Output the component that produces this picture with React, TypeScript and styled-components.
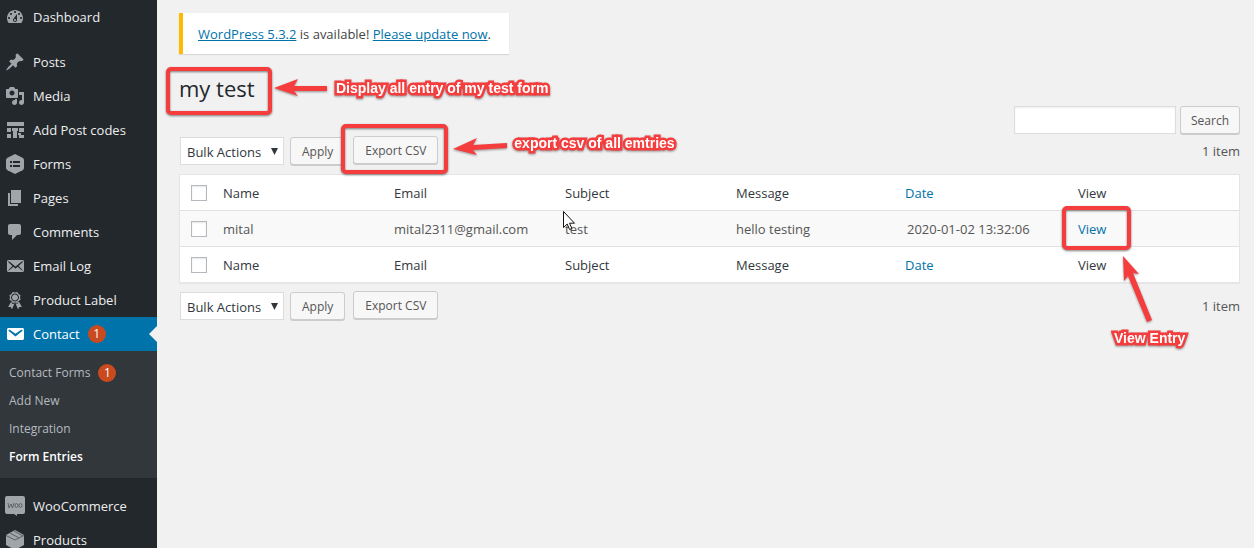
import React from "react";
import styled, { createGlobalStyle } from "styled-components";

const GlobalStyle = createGlobalStyle`
  *, *::before, *::after { box-sizing: border-box; }
  body {
    margin: 0;
    background: #f1f1f1;
    color: #444;
    font-family: "Open Sans", "Noto Sans", sans-serif;
    font-size: 13px;
    line-height: 18px;
  }
  a { color: #0073aa; }
`;

const Shell = styled.div`
  display: flex;
  height: 100vh;
  overflow: hidden;
`;

const Sidebar = styled.nav`
  flex: 0 0 157px;
  background: #23282d;
`;

const MenuList = styled.ul`
  list-style: none;
  margin: 0;
  padding: 0;
`;

const MenuSeparator = styled.li`
  height: 11px;
`;

const MenuLink = styled.a<{ $current?: boolean }>`
  position: relative;
  display: flex;
  align-items: center;
  height: 34px;
  padding-left: 5px;
  gap: 8px;
  font-size: 13px;
  white-space: nowrap;
  text-decoration: none;
  color: ${(p) => (p.$current ? "#fff" : "#eee")};
  background: ${(p) => (p.$current ? "#0073aa" : "transparent")};
  svg {
    flex: none;
    fill: ${(p) => (p.$current ? "#fff" : "#a0a5aa")};
  }
  ${(p) =>
    p.$current &&
    `&::after {
      content: "";
      position: absolute;
      right: 0;
      border: 8px solid transparent;
      border-right-color: #f1f1f1;
    }`}
`;

const Badge = styled.span`
  width: 18px;
  height: 18px;
  border-radius: 9px;
  background: #ca4a1f;
  color: #fff;
  font-size: 12px;
  line-height: 18px;
  text-align: center;
`;

const Submenu = styled.ul`
  list-style: none;
  margin: 0;
  padding: 8px 0 7px;
  background: #32373c;
`;

const SubmenuLink = styled.a<{ $current?: boolean }>`
  display: flex;
  align-items: center;
  gap: 8px;
  height: 28px;
  padding-left: 9px;
  font-size: 12px;
  text-decoration: none;
  color: ${(p) => (p.$current ? "#fff" : "#b4b9be")};
  font-weight: ${(p) => (p.$current ? 600 : 400)};
`;

const Main = styled.main`
  flex: 1;
  min-width: 0;
  padding: 13px 14px 0 22px;
`;

const Notice = styled.p`
  width: fit-content;
  margin: 0;
  padding: 12px 18px 11px 15px;
  border-left: 4px solid #ffb900;
  background: #fff;
  box-shadow: 0 1px 1px rgba(0, 0, 0, 0.1);
  font-size: 13px;
`;

const TitleRow = styled.div`
  display: flex;
  margin: 18px 0 2px;
`;

const Title = styled.h1`
  margin: 0;
  font-size: 22px;
  line-height: 32px;
  font-weight: 400;
  color: #23282d;
`;

const SearchForm = styled.form`
  display: flex;
  justify-content: flex-end;
  gap: 4px;
`;

const SearchInput = styled.input`
  width: 162px;
  height: 28px;
  border: 1px solid #ddd;
  background: #fff;
  box-shadow: inset 0 1px 2px rgba(0, 0, 0, 0.07);
`;

const Button = styled.button`
  height: 28px;
  padding: 1px 11px 0;
  border: 1px solid #ccc;
  border-radius: 3px;
  background: #f7f7f7;
  box-shadow: 0 1px 0 #ccc;
  color: #555;
  font: 12px/26px "Open Sans", "Noto Sans", sans-serif;
  white-space: nowrap;
`;

const SearchButton = styled(Button)`
  padding: 1px 10px 0;
`;

const TableNav = styled.div`
  display: flex;
  align-items: center;
  gap: 6px;
  height: 28px;
`;

const SelectBox = styled.div`
  position: relative;
  margin-left: 1px;
  svg {
    position: absolute;
    top: 11px;
    right: 6px;
    pointer-events: none;
  }
`;

const BulkSelect = styled.select`
  display: block;
  appearance: none;
  width: 104px;
  height: 28px;
  padding: 1px 6px 0;
  border: 1px solid #ddd;
  border-radius: 0;
  background: #fff;
  color: #32373c;
  font: 13px/26px "Open Sans", "Noto Sans", sans-serif;
`;

const ItemCount = styled.span`
  margin-left: auto;
  color: #555;
`;

const Entries = styled.table`
  width: 100%;
  table-layout: fixed;
  border-collapse: separate;
  border-spacing: 0;
  border: 1px solid #e5e5e5;
  background: #fff;
  box-shadow: 0 1px 1px rgba(0, 0, 0, 0.04);
  th, td {
    height: 36px;
    padding: 0 10px;
    text-align: left;
    font-weight: 400;
    font-size: 13px;
    white-space: nowrap;
    border-bottom: 1px solid #e1e1e1;
  }
  th { color: #32373c; }
  td { color: #555; }
  th a { margin-left: -2px; }
  a { text-decoration: none; }
  tbody td { background: #f9f9f9; }
  tfoot th, tfoot td { height: 35px; border-bottom: 0; }
  .check { width: 33px; padding: 0 0 0 11px; }
`;

const CheckBox = styled.input`
  display: block;
  appearance: none;
  width: 16px;
  height: 16px;
  margin: 0;
  border: 1px solid #b4b9be;
  background: #fff;
  box-shadow: inset 0 1px 2px rgba(0, 0, 0, 0.1);
`;

const Anchor = styled.div`
  position: relative;
  width: fit-content;
`;

const ExportSlot = styled(Anchor)`
  margin: 0 0 2px 2px;
`;

const Highlight = styled.span<{ $x: number; $y: number; $w: number; $h: number }>`
  position: absolute;
  left: ${(p) => p.$x}px;
  top: ${(p) => p.$y}px;
  width: ${(p) => p.$w}px;
  height: ${(p) => p.$h}px;
  border: 4px solid #f53d3d;
  border-radius: 5px;
  filter: drop-shadow(0 1px 1px rgba(0, 0, 0, 0.5));
  pointer-events: none;
  z-index: 2;
`;

const Overlay = styled.svg<{ $x: number; $y: number }>`
  position: absolute;
  left: ${(p) => p.$x}px;
  top: ${(p) => p.$y}px;
  overflow: visible;
  pointer-events: none;
  z-index: 2;
`;

const Arrow = styled(Overlay)`
  fill: #f53d3d;
  filter: drop-shadow(0 1px 1px rgba(0, 0, 0, 0.4));
`;

const Caption = styled.span<{ $x: number; $y: number }>`
  position: absolute;
  left: ${(p) => p.$x}px;
  top: ${(p) => p.$y}px;
  z-index: 2;
  color: #fff;
  font: bold 14px/18px "Liberation Sans", Arial, sans-serif;
  white-space: nowrap;
  -webkit-text-stroke: 5px #f53d3d;
  paint-order: stroke fill;
  filter: drop-shadow(0 1px 1px rgba(0, 0, 0, 0.4));
`;

const icons: Record<string, React.ReactNode> = {
  dashboard: <path d="M3.76 16h12.48c1.1-1.37 1.76-3.11 1.76-5 0-4.42-3.58-8-8-8s-8 3.58-8 8c0 1.89.66 3.63 1.76 5zM10 4c.55 0 1 .45 1 1s-.45 1-1 1-1-.45-1-1 .45-1 1-1zM6 6c.55 0 1 .45 1 1s-.45 1-1 1-1-.45-1-1 .45-1 1-1zm8 0c.55 0 1 .45 1 1s-.45 1-1 1-1-.45-1-1 .45-1 1-1zm-5.37 5.55L12 7v6c0 1.1-.9 2-2 2s-2-.9-2-2c0-.57.24-1.08.63-1.45zM4 10c.55 0 1 .45 1 1s-.45 1-1 1-1-.45-1-1 .45-1 1-1zm12 0c.55 0 1 .45 1 1s-.45 1-1 1-1-.45-1-1 .45-1 1-1zm-5 3c0-.55-.45-1-1-1s-1 .45-1 1 .45 1 1 1 1-.45 1-1z" fillRule="evenodd" />,
  posts: <path d="M10.44 3.02l1.82-1.82 6.36 6.35-1.83 1.82c-1.05-.68-2.48-.57-3.41.36l-.75.75c-.92.93-1.04 2.35-.35 3.41l-1.83 1.82-2.41-2.41-2.8 2.79c-.42.42-3.38 2.71-3.8 2.29s1.86-3.39 2.28-3.81l2.79-2.79L4.1 9.36l1.83-1.82c1.05.69 2.48.57 3.4-.36l.75-.75c.93-.92 1.05-2.35.36-3.41z" />,
  media: <path d="M13 11V4c0-.55-.45-1-1-1h-1.67L9 1H5L3.67 3H2c-.55 0-1 .45-1 1v7c0 .55.45 1 1 1h10c.55 0 1-.45 1-1zM7 4.5c1.38 0 2.5 1.12 2.5 2.5S8.38 9.5 7 9.5 4.5 8.38 4.5 7 5.62 4.5 7 4.5zM14 6h5v10.5c0 1.38-1.12 2.5-2.5 2.5S14 17.88 14 16.5s1.12-2.5 2.5-2.5c.17 0 .34.02.5.05V9h-3V6zm-4 8.05V13h2v3.5c0 1.38-1.12 2.5-2.5 2.5S7 17.88 7 16.5 8.12 14 9.5 14c.17 0 .34.02.5.05z" fillRule="evenodd" />,
  codes: <path d="M2 2h17v4H2zM2 8h4v4H2zM7 8h6v3H7zM14 8h5v4h-5zM2 14h4v4H2zM8 11h4v7H8zM13 13h3v2h-3zM14 15h5v3h-5z" />,
  forms: (
    <>
      <path d="M10 0l7.500 3.800q1.500.8 1.500 2.200v8q0 1.400-1.500 2.200L10 20l-7.500-3.800Q1 15.400 1 14V6q0-1.400 1.500-2.200z" />
      <path d="M5 7h2v2H5zM8 7h7v2H8zM5 11h2v2H5zM8 11h7v2H8z" fill="#23282d" />
    </>
  ),
  pages: <path d="M6 15V2h10v13H6zm-1 1h8v2H3V5h2v11z" />,
  comments: <path d="M5 2h9c1.100 0 2 .9 2 2v7c0 1.100-.9 2-2 2h-2l-5 5v-5H5c-1.100 0-2-.9-2-2V4c0-1.100.9-2 2-2z" />,
  emailLog: <path d="M19 14.500v-9c0-.83-.67-1.500-1.500-1.500H3.490c-.83 0-1.500.67-1.500 1.500v9c0 .83.67 1.500 1.500 1.500H17.500c.83 0 1.500-.67 1.500-1.500zm-1.310-9.110c.33.33.15.67-.03.84L13.600 9.950l3.900 4.060c.12.14.2.36.06.51-.13.16-.43.15-.56.05l-4.370-3.730-2.140 1.950-2.130-1.950-4.370 3.730c-.13.1-.43.11-.56-.05-.14-.15-.06-.37.06-.51l3.900-4.060-4.060-3.720c-.18-.17-.36-.51-.03-.84s.67-.17.95.07l6.240 5.040 6.250-5.040c.28-.24.62-.4.95-.07z" fillRule="evenodd" />,
  award: <path d="M4.460 5.160L5 7.460l-.54 2.290 2.010 1.240L7.700 13l2.300-.54 2.300.54 1.230-2.010 2.010-1.240L15 7.460l.54-2.300-2-1.240-1.240-2.010-2.300.55-2.290-.54-1.250 2zm5.550 6.340c-2.210 0-4-1.790-4-4 0-2.200 1.790-4 4-4 2.200 0 4 1.800 4 4 0 2.210-1.800 4-4 4zm-.02-1C8.330 10.500 7 9.160 7 7.500c0-1.650 1.330-3 2.990-3S13 5.850 13 7.500c0 1.660-1.350 3-3.010 3zm3.840 1.100l-1.280 2.240-2.080-.47L13 19.200l1.400-2.200h2.500zm-7.700.07l1.250 2.250 2.130-.51L7 19.200 5.600 17H3.100z" fillRule="evenodd" />,
  email: <path d="M3.870 4h13.250C18.370 4 19 4.590 19 5.790v8.420c0 1.190-.63 1.790-1.880 1.790H3.870c-1.250 0-1.880-.6-1.880-1.790V5.790c0-1.200.63-1.790 1.880-1.790zm6.620 8.600l6.740-5.530c.24-.2.43-.66.13-1.070-.29-.41-.82-.42-1.170-.17l-5.700 3.860L4.800 5.830c-.35-.25-.88-.24-1.170.17-.3.41-.11.87.13 1.070z" fillRule="evenodd" />,
  woo: (
    <>
      <path d="M2 0h16q2 0 2 2v14q0 2-2 2h-6v2l-3-2H2q-2 0-2-2V2q0-2 2-2z" />
      <path d="M3 7l1 5 2-4 1.500 4L9 7" fill="none" stroke="#5d6267" />
      <ellipse cx="11.500" cy="9.500" rx="1.500" ry="2" fill="none" stroke="#5d6267" />
      <ellipse cx="15.500" cy="9.500" rx="1.500" ry="2" fill="none" stroke="#5d6267" />
    </>
  ),
  products: (
    <>
      <path d="M10 0l9 5v10l-9 5-9-5V5z" />
      <path d="M1 5.500l9 4.500 9-4.500M5 3l9 5M9 1l9 5" fill="none" stroke="#5d6267" />
    </>
  ),
};

function Icon({ name }: { name: string }) {
  return (
    <svg width="20" height="20" viewBox="0 0 20 20" aria-hidden="true">
      {icons[name]}
    </svg>
  );
}

function MenuItem({ icon, label }: { icon: string; label: string }) {
  return (
    <li>
      <MenuLink href="#">
        <Icon name={icon} />
        {label}
      </MenuLink>
    </li>
  );
}

function BulkActions({ id, marked }: { id: string; marked?: boolean }) {
  return (
    <TableNav>
      <SelectBox>
        <BulkSelect id={id} aria-label="Bulk Actions">
          <option>Bulk Actions</option>
        </BulkSelect>
        <svg width="7" height="7" viewBox="0 0 7 7" aria-hidden="true">
          <path d="M0 0h7L3.500 7z" fill="#32373c" />
        </svg>
      </SelectBox>
      <Button type="button">Apply</Button>
      <ExportSlot>
        <Button type="button">Export CSV</Button>
        {marked && (
          <>
            <Highlight $x={-12} $y={-12} $w={107} $h={50} />
            <Arrow $x={100} $y={0} width="56" height="22">
              <path d="M0 13L24 2l-4 7 34-2v5l-34 2 4 5z" />
            </Arrow>
            <Caption $x={161} $y={-2}>export csv of all emtries</Caption>
          </>
        )}
      </ExportSlot>
      <ItemCount>1 item</ItemCount>
    </TableNav>
  );
}

const TopNav = styled.div`
  margin: 3px 0 9px;
`;

const BottomNav = styled.div`
  margin-top: 9px;
`;

function HeadCells({ id }: { id: string }) {
  return (
    <tr>
      <td className="check">
        <CheckBox type="checkbox" id={id} aria-label="Select all" />
      </td>
      <th>Name</th>
      <th>Email</th>
      <th>Subject</th>
      <th>Message</th>
      <th><a href="#">Date</a></th>
      <th>View</th>
    </tr>
  );
}

export default function App() {
  return (
    <>
      <GlobalStyle />
      <Shell>
        <Sidebar>
          <MenuList>
            <MenuItem icon="dashboard" label="Dashboard" />
            <MenuSeparator />
            <MenuItem icon="posts" label="Posts" />
            <MenuItem icon="media" label="Media" />
            <MenuItem icon="codes" label="Add Post codes" />
            <MenuItem icon="forms" label="Forms" />
            <MenuItem icon="pages" label="Pages" />
            <MenuItem icon="comments" label="Comments" />
            <MenuItem icon="emailLog" label="Email Log" />
            <MenuItem icon="award" label="Product Label" />
            <li>
              <MenuLink href="#" $current>
                <Icon name="email" />
                Contact <Badge>1</Badge>
              </MenuLink>
              <Submenu>
                <li><SubmenuLink href="#">Contact Forms <Badge>1</Badge></SubmenuLink></li>
                <li><SubmenuLink href="#">Add New</SubmenuLink></li>
                <li><SubmenuLink href="#">Integration</SubmenuLink></li>
                <li><SubmenuLink href="#" $current>Form Entries</SubmenuLink></li>
              </Submenu>
            </li>
            <MenuSeparator />
            <MenuItem icon="woo" label="WooCommerce" />
            <MenuItem icon="products" label="Products" />
          </MenuList>
        </Sidebar>
        <Main>
          <Notice>
            <a href="#">WordPress 5.3.2</a> is available! <a href="#">Please update now</a>.
          </Notice>
          <TitleRow>
            <Anchor>
              <Title>my test</Title>
              <Highlight $x={-13} $y={-5} $w={106} $h={48} />
              <Arrow $x={95} $y={5} width="54" height="20">
                <path d="M0 11L24 2l-4 7h33v5H20l4 5z" />
              </Arrow>
              <Caption $x={157} $y={7}>Display all entry of my test form</Caption>
            </Anchor>
          </TitleRow>
          <SearchForm>
            <SearchInput type="search" aria-label="Search entries" />
            <SearchButton type="button">Search</SearchButton>
          </SearchForm>
          <TopNav>
            <BulkActions id="bulk-top" marked />
          </TopNav>
          <Entries>
            <thead>
              <HeadCells id="all-top" />
            </thead>
            <tbody>
              <tr>
                <td className="check">
                  <CheckBox type="checkbox" id="entry" aria-label="Select mital" />
                </td>
                <td>mital</td>
                <td>mital2311@gmail.com</td>
                <td>
                  <Anchor>
                    test
                    <Overlay $x={-2} $y={-9} width="13" height="20" viewBox="0 0 13 20">
                      <path d="M.5.5v16l3.700-3.500 2.400 5.500 2.300-1-2.400-5.300h5z" fill="#fff" stroke="#111" />
                    </Overlay>
                  </Anchor>
                </td>
                <td>hello testing</td>
                <td>2020-01-02 13:32:06</td>
                <td>
                  <Anchor>
                    <a href="#">View</a>
                    <Highlight $x={-16} $y={-14} $w={69} $h={44} />
                    <Arrow $x={45} $y={36} width="30" height="68">
                      <path d="M0 0l16 18-6-1 19 47-5 2L5 20l-4 5z" />
                    </Arrow>
                    <Caption $x={36} $y={109}>View Entry</Caption>
                  </Anchor>
                </td>
              </tr>
            </tbody>
            <tfoot>
              <HeadCells id="all-bottom" />
            </tfoot>
          </Entries>
          <BottomNav>
            <BulkActions id="bulk-bottom" />
          </BottomNav>
        </Main>
      </Shell>
    </>
  );
}
